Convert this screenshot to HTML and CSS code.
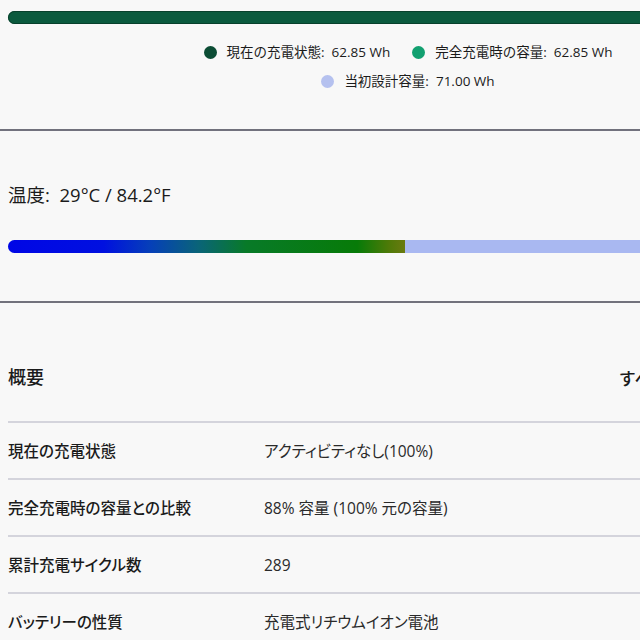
FILE: index.html
```html
<!DOCTYPE html>
<html lang="ja">
<head>
<meta charset="utf-8">
<title>バッテリー</title>
<link rel="stylesheet" href="styles.css">
</head>
<body>
<div class="page">
  <section class="card card-capacity">
    <div class="cap-bar"></div>
    <div class="legend">
      <div class="legend-row">
        <span class="legend-item"><span class="dot dot-current"></span>現在の充電状態:&nbsp; 62.85 Wh</span>
        <span class="legend-item"><span class="dot dot-full"></span>完全充電時の容量:&nbsp; 62.85 Wh</span>
      </div>
      <div class="legend-row">
        <span class="legend-item"><span class="dot dot-design"></span>当初設計容量:&nbsp; 71.00 Wh</span>
      </div>
    </div>
  </section>

  <section class="card card-temp">
    <div class="temp-text">温度:&nbsp; 29°C / 84.2°F</div>
    <div class="temp-bar">
      <div class="temp-fill"></div>
    </div>
  </section>

  <section class="card card-summary">
    <div class="summary-head">
      <h2 class="summary-title">概要</h2>
      <span class="summary-link">すべて表示</span>
    </div>
    <div class="row"><span class="row-label">現在の充電状態</span><span class="row-value">アクティビティなし(100%)</span></div>
    <div class="row"><span class="row-label">完全充電時の容量との比較</span><span class="row-value">88% 容量 (100% 元の容量)</span></div>
    <div class="row"><span class="row-label">累計充電サイクル数</span><span class="row-value">289</span></div>
    <div class="row"><span class="row-label">バッテリーの性質</span><span class="row-value">充電式リチウムイオン電池</span></div>
  </section>
</div>
</body>
</html>
```

FILE: styles.css
```css
html, body {
  margin: 0;
  padding: 0;
  overflow: hidden;
  background: #f8f8f8;
}

body {
  font-family: "Open Sans", "Noto Sans CJK JP", sans-serif;
  color: #1b1b1b;
}

.page {
  width: 816px;
}

.card {
  background: #f8f8f8;
  border-bottom: 2px solid #72727c;
  box-shadow: 0 2px 3px rgba(140, 150, 230, 0.4);
  padding-left: 8px;
}

.card-capacity {
  padding-top: 11px;
  padding-bottom: 38px;
}

.cap-bar {
  height: 13px;
  border-radius: 7px 0 0 7px;
  background: #0b5a3e;
  box-shadow: inset 0 0 0 1px #08402c;
}

.legend {
  margin-top: 18px;
  display: flex;
  flex-direction: column;
  gap: 9px;
  padding-right: 8px;
}

.legend-row {
  display: flex;
  justify-content: center;
  gap: 22px;
  line-height: 20px;
  font-size: 13.5px;
}

.legend-item {
  display: flex;
  align-items: center;
  gap: 10px;
}

.dot {
  width: 13px;
  height: 13px;
  border-radius: 50%;
  display: inline-block;
}

.dot-current { background: #0c4d35; }
.dot-full { background: #12a070; }
.dot-design { background: #b5c1ef; }

.card-temp {
  padding-top: 53px;
  padding-bottom: 48px;
}

.temp-text {
  font-size: 18.5px;
  line-height: 22px;
}

.temp-bar {
  margin-top: 34px;
  height: 13px;
  background: #a9b8f1;
  border-radius: 7px 0 0 7px;
  overflow: hidden;
}

.temp-fill {
  width: 397px;
  height: 100%;
  background: linear-gradient(90deg, #0006e6 0%, #0010e0 24%, #0640b8 36%, #0a6478 48%, #087a28 60%, #077b08 88%, #4f7a08 96%, #6a7a10 100%);
}

.card-summary {
  border-bottom: none;
  box-shadow: none;
  padding-top: 62px;
  padding-right: 8px;
}

.summary-head {
  display: flex;
  justify-content: space-between;
  align-items: center;
  height: 24px;
  padding-bottom: 32px;
  padding-right: 106px;
  border-bottom: 2px solid #d4d4dc;
}

.summary-title {
  margin: 0;
  font-size: 18px;
  font-weight: 500;
  line-height: 24px;
}

.summary-link {
  font-size: 17px;
  font-weight: 500;
}

.row {
  display: grid;
  grid-template-columns: 256px 1fr;
  align-items: center;
  height: 55px;
  border-bottom: 2px solid #d4d4dc;
  font-size: 15.5px;
  font-feature-settings: "palt";
}

.row-label {
  font-weight: 500;
}

.row-value {
  font-weight: 400;
  color: #2a2a2a;
}
```
